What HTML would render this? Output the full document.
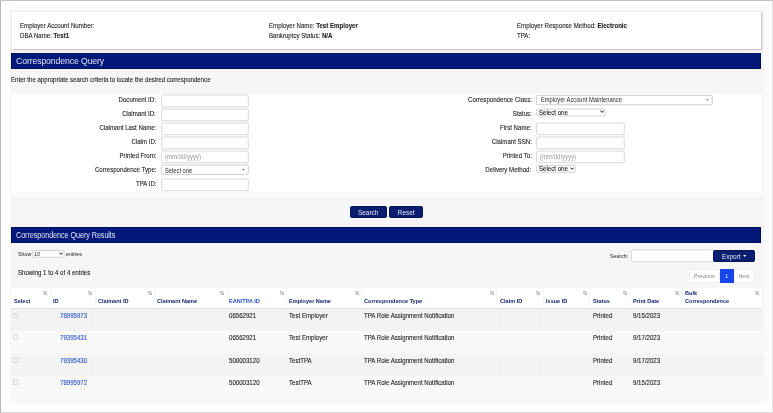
<!DOCTYPE html>
<html><head><meta charset="utf-8"><title>Correspondence Query</title>
<style>
*{box-sizing:border-box;margin:0;padding:0}
html,body{width:773px;height:413px;overflow:hidden;background:#fff}
body{font-family:"Liberation Sans",Arial,sans-serif;font-size:6.7px;color:#1c1c1c;position:relative;-webkit-text-stroke:0.1px #1c1c1c}
.abs{position:absolute;white-space:nowrap}
.sx{display:inline-block;transform:scaleX(.913);transform-origin:0 50%;white-space:nowrap}
.sxc{display:inline-block;transform:scaleX(.913);transform-origin:50% 50%;white-space:nowrap}
.sxr{display:inline-block;transform:scaleX(.913);transform-origin:100% 50%;white-space:nowrap}
.frame{left:0;top:0;width:773px;height:413px;border:1px solid #e2e2e2;border-left-color:#b4b4b4;border-top-color:#c0c0c0;border-bottom-color:#d8d8d8}
.panel{left:10px;top:9.5px;width:753.5px;height:391px;background:#f6f6f6}
.card{left:12px;top:12.4px;width:749.4px;height:36.9px;background:#fff;box-shadow:.7px .7px 1.8px rgba(0,0,0,.22), 0 0 1.5px rgba(0,0,0,.10)}
.bar{left:11px;width:750.4px;background:#03197a;border:0.6px solid #02115c;color:#dfe2f4;-webkit-text-stroke:0}
.bar span{position:absolute;white-space:nowrap}
.white{background:#fff}
.lbl{text-align:right;line-height:8px;height:8px}
.inp{background:#fff;border:0.9px solid #d6d6d6;border-radius:.8px;height:13.2px}
.ph{color:#9a9a9a;font-size:6.6px;line-height:10.8px;padding-left:4.2px;-webkit-text-stroke:0}
.sel2{background:#fff;border:0.8px solid #c4c4c4;border-radius:1px;height:10.4px;font-size:6.2px;line-height:8px;padding-left:4.3px;color:#2a2a2a;-webkit-text-stroke:0}
.sel2t{font-size:6.3px;line-height:8px;color:#2a2a2a;-webkit-text-stroke:0}
.nsel{height:7.6px;color:#1c1c1c}
.nsel .sx{position:absolute;left:2.6px;top:0.2px;line-height:7.6px}
.btn{background:#0a1e70;border:.5px solid #08165a;color:#e6e9f7;border-radius:1.7px;text-align:center;font-size:7.05px;line-height:12.4px;height:12.2px;-webkit-text-stroke:0}
.small{font-size:5.8px;-webkit-text-stroke:0}
.th{font-weight:bold;color:#16276f;font-size:6.08px;line-height:7.6px;-webkit-text-stroke:0}
.td{line-height:8px}
a{color:#2a55c8;text-decoration:none;-webkit-text-stroke:0.1px #2a55c8}
.pg{background:#fff;border:0.5px solid #efefef;color:#808080;font-size:5.8px;text-align:center;line-height:12.4px;height:13.7px;top:269px;-webkit-text-stroke:0}
.cb{width:5.2px;height:5.2px;border:0.6px solid #d9d9d9;border-radius:.9px;background:#f7f7f7}
</style></head><body>

<div id="root" style="position:absolute;left:0;top:0;width:773px;height:413px;will-change:transform;opacity:.999">
<div class="abs frame"></div>
<div class="abs" style="left:10px;top:5px;width:759.5px;height:398.5px;background:#fbfbfb"></div>
<div class="abs panel"></div>
<div class="abs card"></div>
<div class="abs " style="left:19.8px;top:21.70px;line-height:8px;"><span class="sx">Employer Account Number:</span></div>
<div class="abs " style="left:19.8px;top:31.70px;line-height:8px;"><span class="sx">DBA Name: <b>Test1</b></span></div>
<div class="abs " style="left:268.5px;top:21.70px;line-height:8px;"><span class="sx">Employer Name: <b>Test Employer</b></span></div>
<div class="abs " style="left:268.5px;top:31.70px;line-height:8px;"><span class="sx">Bankruptcy Status: <b>N/A</b></span></div>
<div class="abs " style="left:517.2px;top:21.70px;line-height:8px;"><span class="sx">Employer Response Method: <b>Electronic</b></span></div>
<div class="abs " style="left:517.2px;top:31.70px;line-height:8px;"><span class="sx">TPA:</span></div>
<div class="abs bar" style="top:53px;height:15.6px"><span style="left:3.7px;top:0;line-height:13.8px;font-size:9.5px;letter-spacing:-.15px;transform:scaleX(.92);transform-origin:0 50%">Correspondence Query</span></div>
<div class="abs " style="left:10.9px;top:76.20px;line-height:8px;"><span class="sx">Enter the appropriate search criteria to locate the desired correspondence</span></div>
<div class="abs white" style="left:11px;top:93.6px;width:750.5px;height:98.4px"></div>
<div class="abs" style="left:11px;top:192px;width:750.5px;height:7.4px;background:#fbfbfb;border-bottom:0.7px solid #f0f0f0"></div>
<div class="abs lbl" style="left:36px;width:120.2px;top:95.50px"><span class="sxr">Document ID:</span></div>
<div class="abs lbl" style="left:36px;width:120.2px;top:109.50px"><span class="sxr">Claimant ID:</span></div>
<div class="abs lbl" style="left:36px;width:120.2px;top:123.50px"><span class="sxr">Claimant Last Name:</span></div>
<div class="abs lbl" style="left:36px;width:120.2px;top:137.50px"><span class="sxr">Claim ID:</span></div>
<div class="abs lbl" style="left:36px;width:120.2px;top:151.50px"><span class="sxr">Printed From:</span></div>
<div class="abs lbl" style="left:36px;width:120.2px;top:165.50px"><span class="sxr">Correspondence Type:</span></div>
<div class="abs lbl" style="left:36px;width:120.2px;top:179.50px"><span class="sxr">TPA ID:</span></div>
<svg class="abs" style="left:0;top:0" width="773" height="413" viewBox="0 0 773 413"><rect x="161.65" y="94.95" width="86.60" height="11.80" rx="0.9" fill="#fff" stroke="#d4d4d4" stroke-width="0.9"/><rect x="161.65" y="108.95" width="86.60" height="11.80" rx="0.9" fill="#fff" stroke="#d4d4d4" stroke-width="0.9"/><rect x="161.65" y="122.95" width="86.60" height="11.80" rx="0.9" fill="#fff" stroke="#d4d4d4" stroke-width="0.9"/><rect x="161.65" y="136.95" width="86.60" height="11.80" rx="0.9" fill="#fff" stroke="#d4d4d4" stroke-width="0.9"/><rect x="161.65" y="150.95" width="86.60" height="11.80" rx="0.9" fill="#fff" stroke="#d4d4d4" stroke-width="0.9"/><rect x="161.65" y="178.95" width="86.60" height="11.80" rx="0.9" fill="#fff" stroke="#d4d4d4" stroke-width="0.9"/><rect x="161.60" y="165.00" width="86.70" height="9.40" rx="1.1" fill="#fff" stroke="#c2c2c2" stroke-width="0.8"/><rect x="536.60" y="95.40" width="175.70" height="9.40" rx="1.1" fill="#fff" stroke="#c2c2c2" stroke-width="0.8"/><rect x="536.50" y="109.00" width="68.40" height="6.90" rx="1.1" fill="#fff" stroke="#b9b9b9" stroke-width="0.6"/><rect x="536.65" y="122.95" width="87.60" height="11.80" rx="0.9" fill="#fff" stroke="#d4d4d4" stroke-width="0.9"/><rect x="536.65" y="136.95" width="87.60" height="11.80" rx="0.9" fill="#fff" stroke="#d4d4d4" stroke-width="0.9"/><rect x="536.65" y="150.95" width="87.60" height="11.80" rx="0.9" fill="#fff" stroke="#d4d4d4" stroke-width="0.9"/><rect x="536.50" y="165.50" width="38.80" height="6.90" rx="1.1" fill="#fff" stroke="#b9b9b9" stroke-width="0.6"/><rect x="32.60" y="250.50" width="31.40" height="6.80" rx="1.1" fill="#fff" stroke="#b9b9b9" stroke-width="0.6"/><rect x="631.40" y="250.00" width="84.20" height="11.60" rx="1.6" fill="#fff" stroke="#d0d0d0" stroke-width="0.8"/></svg>
<div class="abs ph" style="left:161.2px;top:152.0px"><span class="sx">(mm/dd/yyyy)</span></div>
<div class="abs sel2t" style="left:165.2px;top:166.6px"><span class="sx">Select one</span></div>
<svg class="abs" style="left:242px;top:169.2px" width="2.6" height="1.7" viewBox="0 0 26 17"><path d="M0 0h26L13 17z" fill="#777"/></svg>
<div class="abs lbl" style="left:400px;width:131.6px;top:95.50px"><span class="sxr">Correspondence Class:</span></div>
<div class="abs lbl" style="left:400px;width:131.6px;top:109.50px"><span class="sxr">Status:</span></div>
<div class="abs lbl" style="left:400px;width:131.6px;top:123.50px"><span class="sxr">First Name:</span></div>
<div class="abs lbl" style="left:400px;width:131.6px;top:137.50px"><span class="sxr">Claimant SSN:</span></div>
<div class="abs lbl" style="left:400px;width:131.6px;top:151.50px"><span class="sxr">Printed To:</span></div>
<div class="abs lbl" style="left:400px;width:131.6px;top:165.50px"><span class="sxr">Delivery Method:</span></div>
<div class="abs sel2t" style="left:540.8px;top:96.1px"><span class="sx">Employer Account Maintenance</span></div>
<svg class="abs" style="left:705.6px;top:99.4px" width="2.6" height="1.7" viewBox="0 0 26 17"><path d="M0 0h26L13 17z" fill="#777"/></svg>
<div class="abs nsel" style="left:536.2px;width:69px;top:108.7px"><span class="sx">Select one</span><svg class="abs" style="right:1.2px;top:1.6px" width="4.3" height="3.1" viewBox="0 0 46 32"><path d="M5 6 L23 25 L41 6" fill="none" stroke="#111" stroke-width="10.5"/></svg></div>
<div class="abs ph" style="left:536.2px;top:152.0px"><span class="sx">(mm/dd/yyyy)</span></div>
<div class="abs nsel" style="left:536.2px;width:39.4px;top:165.2px"><span class="sx">Select one</span><svg class="abs" style="right:1.2px;top:1.6px" width="4.3" height="3.1" viewBox="0 0 46 32"><path d="M5 6 L23 25 L41 6" fill="none" stroke="#111" stroke-width="10.5"/></svg></div>
<div class="abs btn" style="left:349.9px;width:37.2px;top:206.2px"><span class="sxc">Search</span></div>
<div class="abs btn" style="left:389.2px;width:33.8px;top:206.2px"><span class="sxc">Reset</span></div>
<div class="abs bar" style="top:227px;height:15.6px"><span style="left:3.8px;top:0;line-height:15.2px;font-size:8.3px;letter-spacing:-.1px;transform:scaleX(.876);transform-origin:0 50%">Correspondence Query Results</span></div>
<div class="abs small" style="left:17.8px;top:250.00px;line-height:8px;"><span class="sx">Show</span></div>
<div class="abs nsel small" style="left:32.3px;width:32px;top:250.3px;height:7.4px"><span class="sx" style="left:2.0px;top:0.9px">10</span><svg class="abs" style="right:1.2px;top:1.6px" width="4.3" height="3.1" viewBox="0 0 46 32"><path d="M5 6 L23 25 L41 6" fill="none" stroke="#111" stroke-width="10.5"/></svg></div>
<div class="abs small" style="left:66.3px;top:250.00px;line-height:8px;"><span class="sx">entries</span></div>
<div class="abs small" style="left:610.2px;top:252.00px;line-height:8px;"><span class="sx">Search:</span></div>
<div class="abs btn" style="left:713.2px;width:41.6px;top:249.6px;height:12.4px;line-height:12px;font-size:7.1px"><span class="sxc">Export</span><svg style="margin-left:1.9px;vertical-align:1.7px" width="3.5" height="1.9" viewBox="0 0 35 19"><path d="M0 0h35L17.5 19z" fill="#e6e9f7"/></svg></div>
<div class="abs " style="left:17.6px;top:268.60px;line-height:8px;"><span class="sx">Showing 1 to 4 of 4 entries</span></div>
<div class="abs pg" style="left:689.2px;width:30.8px;border-radius:1.5px 0 0 1.5px"><span class="sxc">Previous</span></div>
<div class="abs pg" style="left:719.8px;width:13.9px;background:#1845ee;border-color:#1845ee;color:#fff"><span class="sxc">1</span></div>
<div class="abs pg" style="left:733.6px;width:21px;border-radius:0 1.5px 1.5px 0"><span class="sxc">Next</span></div>
<div class="abs white" style="left:11px;top:288px;width:750.5px;height:20.1px"></div>
<div class="abs" style="left:11px;top:307.8px;width:750.5px;height:0.9px;background:#e2e2e2;z-index:2"></div>
<div class="abs" style="left:11px;top:308.1px;width:750.5px;height:22.8px;background:#f3f3f3"></div>
<div class="abs" style="left:11px;top:330.9px;width:750.5px;height:22.6px;background:#f9f9f9"></div>
<div class="abs" style="left:11px;top:353.5px;width:750.5px;height:22.4px;background:#f3f3f3"></div>
<div class="abs" style="left:11px;top:375.9px;width:750.5px;height:22.4px;background:#f9f9f9"></div>
<div class="abs" style="left:11px;top:398.3px;width:750.5px;height:2.2px;background:#f8f8f8"></div>
<div class="abs" style="left:50.0px;top:288px;width:0.7px;height:20.1px;background:#f4f4f4"></div>
<div class="abs" style="left:50.0px;top:308.1px;width:0.7px;height:90.2px;background:rgba(255,255,255,.22)"></div>
<div class="abs" style="left:95.0px;top:288px;width:0.7px;height:20.1px;background:#f4f4f4"></div>
<div class="abs" style="left:95.0px;top:308.1px;width:0.7px;height:90.2px;background:rgba(255,255,255,.22)"></div>
<div class="abs" style="left:154.39999999999998px;top:288px;width:0.7px;height:20.1px;background:#f4f4f4"></div>
<div class="abs" style="left:154.39999999999998px;top:308.1px;width:0.7px;height:90.2px;background:rgba(255,255,255,.22)"></div>
<div class="abs" style="left:226.7px;top:288px;width:0.7px;height:20.1px;background:#f4f4f4"></div>
<div class="abs" style="left:226.7px;top:308.1px;width:0.7px;height:90.2px;background:rgba(255,255,255,.22)"></div>
<div class="abs" style="left:286.2px;top:288px;width:0.7px;height:20.1px;background:#f4f4f4"></div>
<div class="abs" style="left:286.2px;top:308.1px;width:0.7px;height:90.2px;background:rgba(255,255,255,.22)"></div>
<div class="abs" style="left:361.2px;top:288px;width:0.7px;height:20.1px;background:#f4f4f4"></div>
<div class="abs" style="left:361.2px;top:308.1px;width:0.7px;height:90.2px;background:rgba(255,255,255,.22)"></div>
<div class="abs" style="left:496.2px;top:288px;width:0.7px;height:20.1px;background:#f4f4f4"></div>
<div class="abs" style="left:496.2px;top:308.1px;width:0.7px;height:90.2px;background:rgba(255,255,255,.22)"></div>
<div class="abs" style="left:542.7px;top:288px;width:0.7px;height:20.1px;background:#f4f4f4"></div>
<div class="abs" style="left:542.7px;top:308.1px;width:0.7px;height:90.2px;background:rgba(255,255,255,.22)"></div>
<div class="abs" style="left:589.2px;top:288px;width:0.7px;height:20.1px;background:#f4f4f4"></div>
<div class="abs" style="left:589.2px;top:308.1px;width:0.7px;height:90.2px;background:rgba(255,255,255,.22)"></div>
<div class="abs" style="left:629.2px;top:288px;width:0.7px;height:20.1px;background:#f4f4f4"></div>
<div class="abs" style="left:629.2px;top:308.1px;width:0.7px;height:90.2px;background:rgba(255,255,255,.22)"></div>
<div class="abs" style="left:681.7px;top:288px;width:0.7px;height:20.1px;background:#f4f4f4"></div>
<div class="abs" style="left:681.7px;top:308.1px;width:0.7px;height:90.2px;background:rgba(255,255,255,.22)"></div>
<div class="abs th" style="left:13.5px;top:297.4px"><span class="sx">Select</span></div>
<svg class="abs" style="left:43.3px;top:290.8px" width="4.2" height="4.2" viewBox="0 0 42 42"><g fill="none" stroke="#6c6c6c" stroke-width="5.2"><path d="M11 40V4M2 14l9-10 9 10"/><path d="M31 2v36M22 28l9 10 9-10"/></g></svg>
<div class="abs th" style="left:53.1px;top:297.4px"><span class="sx">ID</span></div>
<svg class="abs" style="left:88.3px;top:290.8px" width="4.2" height="4.2" viewBox="0 0 42 42"><g fill="none" stroke="#6c6c6c" stroke-width="5.2"><path d="M11 40V4M2 14l9-10 9 10"/><path d="M31 2v36M22 28l9 10 9-10"/></g></svg>
<div class="abs th" style="left:97.9px;top:297.4px"><span class="sx">Claimant ID</span></div>
<svg class="abs" style="left:147.7px;top:290.8px" width="4.2" height="4.2" viewBox="0 0 42 42"><g fill="none" stroke="#6c6c6c" stroke-width="5.2"><path d="M11 40V4M2 14l9-10 9 10"/><path d="M31 2v36M22 28l9 10 9-10"/></g></svg>
<div class="abs th" style="left:157px;top:297.4px"><span class="sx">Claimant Name</span></div>
<svg class="abs" style="left:220.0px;top:290.8px" width="4.2" height="4.2" viewBox="0 0 42 42"><g fill="none" stroke="#6c6c6c" stroke-width="5.2"><path d="M11 40V4M2 14l9-10 9 10"/><path d="M31 2v36M22 28l9 10 9-10"/></g></svg>
<div class="abs th" style="left:229.4px;top:297.4px;color:#2450d8"><span class="sx">EAN/TPA ID</span></div>
<svg class="abs" style="left:279.5px;top:290.8px" width="4.2" height="4.2" viewBox="0 0 42 42"><g fill="none" stroke="#6c6c6c" stroke-width="5.2"><path d="M11 40V4M2 14l9-10 9 10"/><path d="M31 2v36M22 28l9 10 9-10"/></g></svg>
<div class="abs th" style="left:288.9px;top:297.4px"><span class="sx">Employer Name</span></div>
<svg class="abs" style="left:354.5px;top:290.8px" width="4.2" height="4.2" viewBox="0 0 42 42"><g fill="none" stroke="#6c6c6c" stroke-width="5.2"><path d="M11 40V4M2 14l9-10 9 10"/><path d="M31 2v36M22 28l9 10 9-10"/></g></svg>
<div class="abs th" style="left:363.6px;top:297.4px"><span class="sx">Correspondence Type</span></div>
<svg class="abs" style="left:489.5px;top:290.8px" width="4.2" height="4.2" viewBox="0 0 42 42"><g fill="none" stroke="#6c6c6c" stroke-width="5.2"><path d="M11 40V4M2 14l9-10 9 10"/><path d="M31 2v36M22 28l9 10 9-10"/></g></svg>
<div class="abs th" style="left:499.8px;top:297.4px"><span class="sx">Claim ID</span></div>
<svg class="abs" style="left:536.0px;top:290.8px" width="4.2" height="4.2" viewBox="0 0 42 42"><g fill="none" stroke="#6c6c6c" stroke-width="5.2"><path d="M11 40V4M2 14l9-10 9 10"/><path d="M31 2v36M22 28l9 10 9-10"/></g></svg>
<div class="abs th" style="left:546.4px;top:297.4px"><span class="sx">Issue ID</span></div>
<svg class="abs" style="left:582.5px;top:290.8px" width="4.2" height="4.2" viewBox="0 0 42 42"><g fill="none" stroke="#6c6c6c" stroke-width="5.2"><path d="M11 40V4M2 14l9-10 9 10"/><path d="M31 2v36M22 28l9 10 9-10"/></g></svg>
<div class="abs th" style="left:592.5px;top:297.4px"><span class="sx">Status</span></div>
<svg class="abs" style="left:622.5px;top:290.8px" width="4.2" height="4.2" viewBox="0 0 42 42"><g fill="none" stroke="#6c6c6c" stroke-width="5.2"><path d="M11 40V4M2 14l9-10 9 10"/><path d="M31 2v36M22 28l9 10 9-10"/></g></svg>
<div class="abs th" style="left:632.5px;top:297.4px"><span class="sx">Print Date</span></div>
<svg class="abs" style="left:675.0px;top:290.8px" width="4.2" height="4.2" viewBox="0 0 42 42"><g fill="none" stroke="#6c6c6c" stroke-width="5.2"><path d="M11 40V4M2 14l9-10 9 10"/><path d="M31 2v36M22 28l9 10 9-10"/></g></svg>
<div class="abs th" style="left:685px;top:289.4px"><span class="sx">Bulk</span></div>
<div class="abs th" style="left:685px;top:297.4px"><span class="sx">Correspondence</span></div>
<svg class="abs" style="left:754.5px;top:290.8px" width="4.2" height="4.2" viewBox="0 0 42 42"><g fill="none" stroke="#6c6c6c" stroke-width="5.2"><path d="M11 40V4M2 14l9-10 9 10"/><path d="M31 2v36M22 28l9 10 9-10"/></g></svg>
<div class="abs cb" style="left:13.2px;top:312.6px"></div>
<div class="abs td" style="left:59.5px;top:312.00px;line-height:8px;"><span class="sx"><a>78995973</a></span></div>
<div class="abs td" style="left:229.4px;top:312.00px;line-height:8px;"><span class="sx">06562921</span></div>
<div class="abs td" style="left:288.9px;top:312.00px;line-height:8px;"><span class="sx">Test Employer</span></div>
<div class="abs td" style="left:363.6px;top:312.00px;line-height:8px;"><span class="sx">TPA Role Assignment Notification</span></div>
<div class="abs td" style="left:592.5px;top:312.00px;line-height:8px;"><span class="sx">Printed</span></div>
<div class="abs td" style="left:632.5px;top:312.00px;line-height:8px;"><span class="sx">9/15/2023</span></div>
<div class="abs cb" style="left:13.2px;top:334.4px"></div>
<div class="abs td" style="left:59.5px;top:333.80px;line-height:8px;"><span class="sx"><a>79395431</a></span></div>
<div class="abs td" style="left:229.4px;top:333.80px;line-height:8px;"><span class="sx">06562921</span></div>
<div class="abs td" style="left:288.9px;top:333.80px;line-height:8px;"><span class="sx">Test Employer</span></div>
<div class="abs td" style="left:363.6px;top:333.80px;line-height:8px;"><span class="sx">TPA Role Assignment Notification</span></div>
<div class="abs td" style="left:592.5px;top:333.80px;line-height:8px;"><span class="sx">Printed</span></div>
<div class="abs td" style="left:632.5px;top:333.80px;line-height:8px;"><span class="sx">9/17/2023</span></div>
<div class="abs cb" style="left:13.2px;top:357.6px"></div>
<div class="abs td" style="left:59.5px;top:357.00px;line-height:8px;"><span class="sx"><a>79395430</a></span></div>
<div class="abs td" style="left:229.4px;top:357.00px;line-height:8px;"><span class="sx">500003120</span></div>
<div class="abs td" style="left:288.9px;top:357.00px;line-height:8px;"><span class="sx">TestTPA</span></div>
<div class="abs td" style="left:363.6px;top:357.00px;line-height:8px;"><span class="sx">TPA Role Assignment Notification</span></div>
<div class="abs td" style="left:592.5px;top:357.00px;line-height:8px;"><span class="sx">Printed</span></div>
<div class="abs td" style="left:632.5px;top:357.00px;line-height:8px;"><span class="sx">9/17/2023</span></div>
<div class="abs cb" style="left:13.2px;top:379.4px"></div>
<div class="abs td" style="left:59.5px;top:378.80px;line-height:8px;"><span class="sx"><a>78995972</a></span></div>
<div class="abs td" style="left:229.4px;top:378.80px;line-height:8px;"><span class="sx">500003120</span></div>
<div class="abs td" style="left:288.9px;top:378.80px;line-height:8px;"><span class="sx">TestTPA</span></div>
<div class="abs td" style="left:363.6px;top:378.80px;line-height:8px;"><span class="sx">TPA Role Assignment Notification</span></div>
<div class="abs td" style="left:592.5px;top:378.80px;line-height:8px;"><span class="sx">Printed</span></div>
<div class="abs td" style="left:632.5px;top:378.80px;line-height:8px;"><span class="sx">9/15/2023</span></div>
</div></body></html>
